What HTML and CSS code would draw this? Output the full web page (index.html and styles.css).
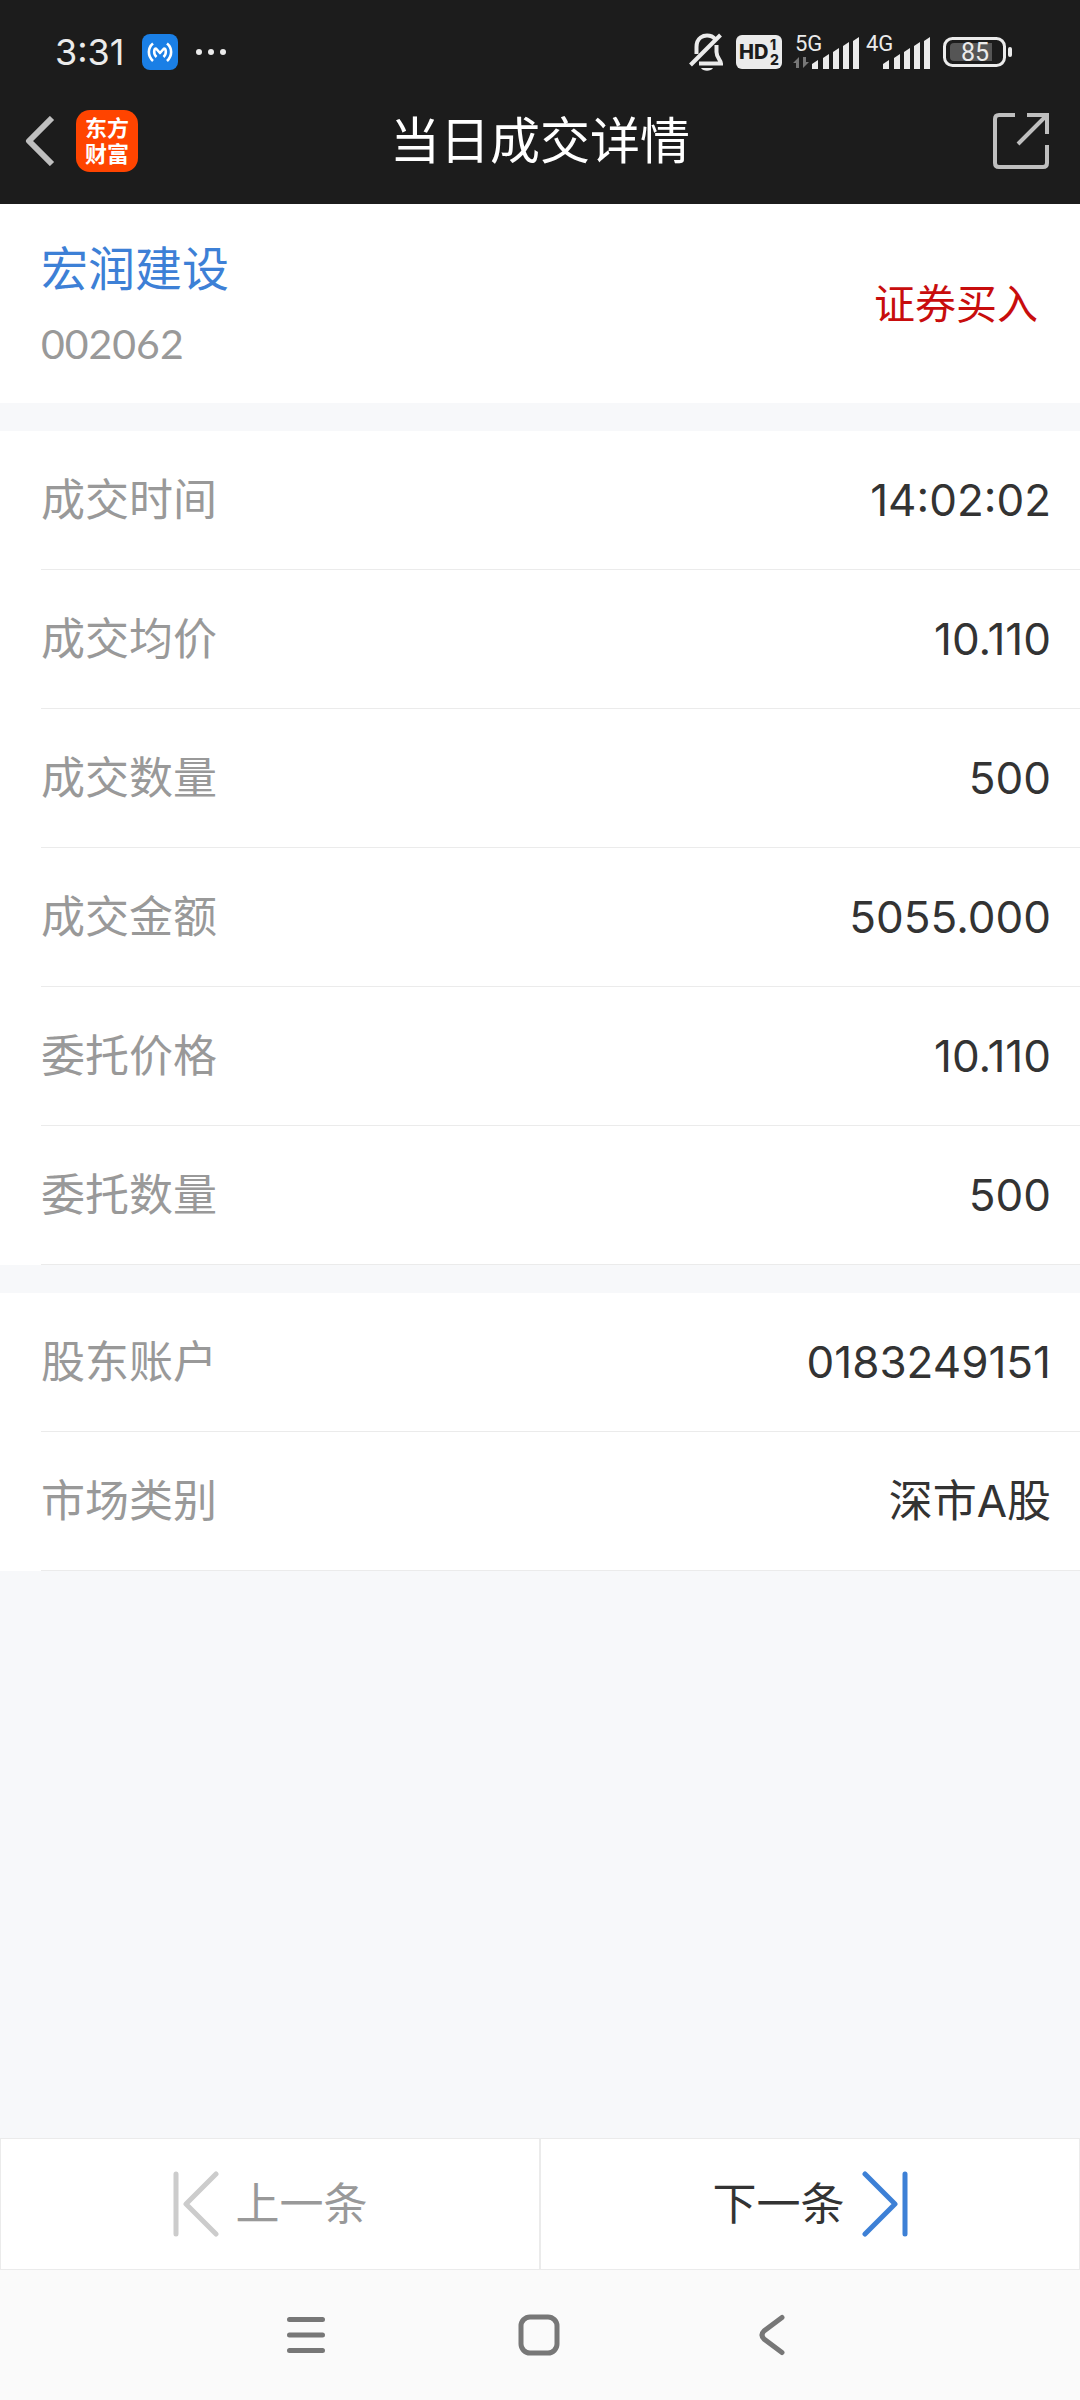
FILE: index.html
```html
<!DOCTYPE html>
<html lang="zh-CN">
<head>
    <meta charset="UTF-8">
    <meta name="viewport" content="width=device-width, initial-scale=1.0">
    <title>当日成交详情</title>
    <link rel="stylesheet" href="styles.css">
</head>
<body>
    <div class="top">
        <div class="status-bar">
            <span class="time">3:31</span>
            <svg class="app-badge" width="36" height="36" viewBox="0 0 36 36" fill="none" stroke="#fff" stroke-width="2.6">
                <rect width="36" height="36" rx="8" fill="#1a7fe6" stroke="none"/>
                <path d="M11 9.500C5.500 14 5.500 22 11 27M25 9.500C30.500 14 30.500 22 25 27"/>
                <path d="M14.500 23C11 20 12 14.500 14 14.500L18 19L22 14.500C24 14.500 25 20 21.500 23" stroke-linejoin="round"/>
            </svg>
            <svg class="more" width="32" height="8" viewBox="0 0 32 8" fill="#ebebeb">
                <circle cx="4" cy="4" r="3"/>
                <circle cx="16" cy="4" r="3"/>
                <circle cx="28" cy="4" r="3"/>
            </svg>
            <div class="status-icons">
                <svg width="36" height="40" viewBox="0 0 36 40" fill="none" stroke="#ebebeb" stroke-width="4">
                    <path d="M7.500 22V15C7.500 5 15 3.500 18 3.500C21.500 3.500 24.500 5 26 7"/>
                    <path d="M27.500 13V20C27.500 26 32 28 32 31.500H10"/>
                    <path d="M1.500 33L31.500 3"/>
                    <path d="M12 36H24C22 39.500 14 39.500 12 36Z" fill="#ebebeb" stroke="none"/>
                </svg>
                <svg width="46" height="34" viewBox="0 0 46 34">
                    <rect width="46" height="34" rx="6" fill="#ebebeb"/>
                    <text class="hd" x="3" y="24">HD</text>
                    <text class="hd-num" x="34" y="15">1</text>
                    <text class="hd-num" x="34" y="30">2</text>
                </svg>
                <svg width="68" height="44" viewBox="0 -4 68 44" fill="#ebebeb">
                    <text class="net" x="2" y="17">5G</text>
                    <path d="M0 29L6 23V34H3V29ZM10 23H13V28H16L10 34Z" fill="#777"/>
                    <path d="M19 30L25 26V35H19ZM30 24L36 20V35H30ZM40 18L46 14V35H40ZM50 12L56 8V35H50ZM60 7L66 3V35H60Z"/>
                </svg>
                <svg width="66" height="44" viewBox="0 -4 66 44" fill="#ebebeb">
                    <text class="net" x="0" y="17">4G</text>
                    <path d="M17 30L23 26V35H17ZM28 24L34 20V35H28ZM38 18L44 14V35H38ZM48 12L54 8V35H48ZM58 7L64 3V35H58Z"/>
                </svg>
                <svg class="battery" width="70" height="30" viewBox="0 0 70 30">
                    <rect x="1.500" y="1.500" width="60" height="27" rx="8" fill="none" stroke="#ebebeb" stroke-width="3"/>
                    <path d="M11 6H49V24H11Q7 24 7 20V10Q7 6 11 6Z" fill="#555"/>
                    <rect x="65" y="10" width="4" height="10" rx="2" fill="#ebebeb"/>
                    <text class="level" x="32" y="24" text-anchor="middle">85</text>
                </svg>
            </div>
        </div>
        <header class="header">
            <div class="header-left">
                <button class="icon-btn" aria-label="返回">
                    <svg width="30" height="50" viewBox="0 0 30 50" fill="none" stroke="#bfbfbf" stroke-width="6" stroke-linejoin="round">
                        <path d="M27 2L4 25L27 48"/>
                    </svg>
                </button>
                <div class="logo"><span>东方</span><span>财富</span></div>
            </div>
            <h1>当日成交详情</h1>
            <div class="header-right">
                <button class="icon-btn" aria-label="分享">
                    <svg width="56" height="56" viewBox="0 0 56 56" fill="none" stroke="#bfbfbf" stroke-width="4">
                        <path d="M22 2H6Q2 2 2 6V50Q2 54 6 54H50Q54 54 54 50V32"/>
                        <path d="M34 2H54V21M54 2L25 31"/>
                    </svg>
                </button>
            </div>
        </header>
    </div>

    <main>
        <section class="stock">
            <div class="stock-name">
                <h2>宏润建设</h2>
                <p class="code">002062</p>
            </div>
            <span class="side">证券买入</span>
        </section>

        <dl class="list">
            <div class="row"><dt>成交时间</dt><dd>14:02:02</dd></div>
            <div class="row"><dt>成交均价</dt><dd>10.110</dd></div>
            <div class="row"><dt>成交数量</dt><dd>500</dd></div>
            <div class="row"><dt>成交金额</dt><dd>5055.000</dd></div>
            <div class="row"><dt>委托价格</dt><dd>10.110</dd></div>
            <div class="row"><dt>委托数量</dt><dd>500</dd></div>
        </dl>

        <dl class="list">
            <div class="row"><dt>股东账户</dt><dd>0183249151</dd></div>
            <div class="row"><dt>市场类别</dt><dd>深市A股</dd></div>
        </dl>
    </main>

    <div class="pager">
        <button class="prev" disabled>
            <svg width="46" height="66" viewBox="0 0 46 66" fill="none" stroke="#ccc" stroke-width="5" stroke-linecap="round" stroke-linejoin="round">
                <path d="M3 3V63M43 3L13 33L43 63"/>
            </svg>
            上一条
        </button>
        <button class="next">
            下一条
            <svg width="46" height="66" viewBox="0 0 46 66" fill="none" stroke="#3d80d6" stroke-width="5" stroke-linecap="round" stroke-linejoin="round">
                <path d="M43 3V63M3 3L33 33L3 63"/>
            </svg>
        </button>
    </div>

    <nav class="system-nav">
        <button class="icon-btn" aria-label="菜单">
            <svg width="38" height="36" viewBox="0 0 38 36" stroke="#777" stroke-width="5" stroke-linecap="round">
                <path d="M2.500 2.500H35.500M2.500 18H35.500M2.500 33.500H35.500"/>
            </svg>
        </button>
        <button class="icon-btn" aria-label="主页">
            <svg width="42" height="42" viewBox="0 0 42 42" fill="none" stroke="#777" stroke-width="5">
                <rect x="3" y="3" width="36" height="36" rx="9"/>
            </svg>
        </button>
        <button class="icon-btn" aria-label="后退">
            <svg width="26" height="42" viewBox="0 0 26 42" fill="none" stroke="#777" stroke-width="5" stroke-linecap="round">
                <path d="M23 3.500L5 17Q1 21 5 25L23 38.500"/>
            </svg>
        </button>
    </nav>
</body>
</html>
```
FILE: styles.css
```css
* {
  margin: 0;
  padding: 0;
  box-sizing: border-box;
}
body {
  display: flex;
  flex-direction: column;
  min-height: 100vh;
  background: #f7f8fa;
  color: #333;
  font-family: Inter, "Noto Sans CJK SC", sans-serif;
  font-size: 44px;
  line-height: 60px;
}
svg {
  display: block;
  flex: none;
}
button {
  border: 0;
  background: none;
  font: inherit;
  color: inherit;
  cursor: pointer;
}
h1, h2 {
  font-weight: 400;
}

/* status bar + title */
.top {
  background: #1c1c1c;
  color: #fff;
}
.status-bar {
  display: flex;
  align-items: center;
  height: 78px;
  padding: 26px 67px 0 55px;
}
.time {
  font-size: 36px;
  line-height: 52px;
  color: #ebebeb;
}
.app-badge {
  margin-left: 17px;
}
.more {
  margin-left: 17px;
}
.status-icons {
  display: flex;
  align-items: center;
  gap: 11px;
  margin-left: auto;
}
.status-icons svg + svg + svg + svg {
  margin-left: -6px;
}
.status-icons .battery {
  margin-left: 0;
}
.hd {
  font-size: 20px;
  font-weight: 800;
  fill: #1c1c1c;
}
.hd-num {
  font-size: 14px;
  font-weight: 800;
  fill: #1c1c1c;
}
.net {
  font-family: Roboto, sans-serif;
  font-size: 22px;
}
.level {
  font-family: Roboto, sans-serif;
  font-size: 25px;
  fill: #ebebeb;
}
.header {
  display: grid;
  grid-template-columns: 1fr auto 1fr;
  align-items: center;
  height: 126px;
  padding: 0 25px;
}
.header h1 {
  font-size: 50px;
  line-height: 72px;
}
.header-left {
  display: flex;
  align-items: center;
  gap: 21px;
}
.header-right {
  display: flex;
  justify-content: flex-end;
  padding-right: 6px;
}
.logo {
  display: flex;
  flex-direction: column;
  justify-content: center;
  align-items: center;
  width: 62px;
  height: 62px;
  border-radius: 14px;
  background: #ff4400;
  font-size: 22px;
  font-weight: 700;
  line-height: 26px;
}

/* content */
main {
  flex: 1;
}
.stock {
  display: flex;
  justify-content: space-between;
  align-items: center;
  padding: 0 42px 0 41px;
  background: #fff;
}
.stock-name {
  padding: 32px 0 26px;
}
.stock h2 {
  font-size: 47px;
  line-height: 66px;
  color: #3d80d6;
}
.code {
  margin-top: 9px;
  font-family: Lato, sans-serif;
  font-size: 41px;
  line-height: 66px;
  color: #999;
}
.side {
  font-size: 41px;
  color: #c80d0d;
}
.list {
  margin-top: 28px;
  padding-left: 41px;
  background: #fff;
}
.row {
  display: flex;
  justify-content: space-between;
  align-items: center;
  height: 139px;
  padding-right: 29px;
  border-bottom: 1px solid #ebebeb;
}
.row dt {
  color: #999;
}

/* prev / next */
.pager {
  display: flex;
}
.pager button {
  display: flex;
  flex: 1;
  justify-content: center;
  align-items: center;
  gap: 17px;
  height: 132px;
  border: 1px solid #ebebeb;
  background: #fff;
}
.pager .prev {
  color: #999;
}

.system-nav {
  display: flex;
  justify-content: center;
  height: 130px;
  padding: 0 191px 0 189px;
  background: #fafafa;
}
.system-nav .icon-btn {
  display: flex;
  flex: 1;
  justify-content: center;
  align-items: center;
}
```
